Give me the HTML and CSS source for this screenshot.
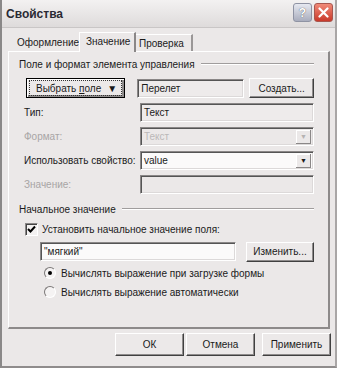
FILE: index.html
```html
<!DOCTYPE html>
<html lang="ru">
<head>
    <meta charset="UTF-8">
    <title>Свойства</title>
    <link rel="stylesheet" href="styles.css">
</head>
<body>
    <div class="window">
        <div class="titlebar">
            <span class="title">Свойства</span>
            <div class="title-buttons">
                <span class="tb-btn help">?</span>
                <span class="tb-btn close">
                    <svg width="11" height="11" viewBox="0 0 11 11"><path d="M1.5 1.5 L9.5 9.5 M9.5 1.5 L1.5 9.5" stroke="#fff" stroke-width="2.2" stroke-linecap="round"/></svg>
                </span>
            </div>
        </div>

        <div class="tabs">
            <span class="tab">Оформление</span>
            <span class="tab active">Значение</span>
            <span class="tab">Проверка</span>
        </div>

        <div class="panel">
            <div class="group-title"><span>Поле и формат элемента управления</span></div>

            <div class="row row-first">
                <span class="button default"><span class="focus"><span>Выбрать&nbsp;<u>п</u>оле</span><b class="arrow">&#9660;</b></span></span>
                <span class="field readonly field-short">Перелет</span>
                <span class="button btn-create">Создать...</span>
            </div>

            <div class="row">
                <span class="label">Тип:</span>
                <span class="field readonly">Текст</span>
            </div>
            <div class="row">
                <span class="label disabled">Формат:</span>
                <span class="field combo disabled-field"><span class="muted">Текст</span><span class="drop"><b>&#9660;</b></span></span>
            </div>
            <div class="row">
                <span class="label">Использовать свойство:</span>
                <span class="field combo white">value<span class="drop"><b>&#9660;</b></span></span>
            </div>
            <div class="row">
                <span class="label disabled">Значение:</span>
                <span class="field disabled-field"></span>
            </div>

            <div class="group-title second"><span>Начальное значение</span></div>

            <div class="check-row">
                <span class="checkbox">
                    <svg width="9" height="9" viewBox="0 0 9 9"><path d="M1 4 L3.5 6.5 L8 1.5" stroke="#000" stroke-width="2" fill="none"/></svg>
                </span>
                <span>Установить начальное значение поля:</span>
            </div>

            <div class="row value-row">
                <span class="field white field-value">"мягкий"</span>
                <span class="button btn-change">Изменить...</span>
            </div>

            <div class="radio-row">
                <span class="radio checked"></span>
                <span>Вычислять выражение при загрузке формы</span>
            </div>
            <div class="radio-row">
                <span class="radio"></span>
                <span>Вычислять выражение автоматически</span>
            </div>
        </div>

        <div class="footer">
            <span class="button footer-btn">ОК</span>
            <span class="button footer-btn">Отмена</span>
            <span class="button footer-btn">Применить</span>
        </div>
    </div>
</body>
</html>
```

FILE: styles.css
```css
body {
    margin: 0;
    font-family: "Liberation Sans", Arial, sans-serif;
    font-size: 10px;
    color: #1a1a1a;
    background: #e9e6e6;
}
.window {
    width: 337px;
    height: 368px;
    box-sizing: border-box;
    background-color: #ebe8e8;
    border-left: 2px solid #8a8888;
    border-right: 2px solid #a9a6a6;
    border-bottom: 2px solid #8f8c8c;
    display: flex;
    flex-direction: column;
    white-space: nowrap;
}
.titlebar {
    height: 27px;
    display: flex;
    align-items: center;
    justify-content: space-between;
    padding: 0 2px 0 4px;
    background: linear-gradient(#f3f1f1, #dedbdb);
    border-bottom: 1px solid #c9c6c6;
}
.title {
    font-weight: bold;
    font-size: 12px;
    color: #2a2a34;
}
.title-buttons {
    display: flex;
    gap: 2px;
    margin-top: -2px;
}
.tb-btn {
    width: 19px;
    height: 19px;
    border-radius: 3px;
    display: flex;
    align-items: center;
    justify-content: center;
    box-sizing: border-box;
}
.help {
    background: linear-gradient(#e6e8f0, #a9adbd);
    border: 1px solid #8f93a3;
    color: #fff;
    font-weight: bold;
    font-size: 12px;
    text-shadow: 0 0 1px #333;
}
.close {
    background: linear-gradient(#f08a78, #c9392a);
    border: 1px solid #a8564e;
}
.tabs {
    display: flex;
    align-items: flex-end;
    height: 23px;
    padding-left: 8px;
}
.tab {
    height: 17px;
    line-height: 17px;
    box-sizing: border-box;
    padding: 0 5px 0 7px;
}
.tab:first-child {
    width: 69px;
}
.tab.active {
    height: 20px;
    line-height: 18px;
    width: 57px;
    padding-left: 6px;
    border-left: 1px solid #fff;
    border-top: 1px solid #fff;
    border-right: 2px solid #8a8787;
    margin-bottom: -1px;
    background: #ebe8e8;
    position: relative;
    z-index: 1;
}
.tab:last-child {
    width: 57px;
    padding-left: 3px;
    border-top: 1px solid #fff;
    border-right: 2px solid #9a9797;
}
.panel {
    margin: 0 5px 0 6px;
    height: 278px;
    box-sizing: border-box;
    border-top: 1px solid #fff;
    border-left: 1px solid #fff;
    border-right: 2px solid #8d8a8a;
    border-bottom: 2px solid #8d8a8a;
    padding: 5px 14px 0 10px;
}
.group-title {
    display: flex;
    align-items: center;
    height: 14px;
}
.group-title::after {
    content: "";
    flex: 1;
    margin-left: 6px;
    border-top: 1px solid #a09d9d;
    border-bottom: 1px solid #fff;
}
.group-title.second {
    margin-top: 8px;
}
.row {
    display: flex;
    align-items: center;
    height: 19px;
    margin-top: 5px;
    padding-left: 5px;
}
.row-first {
    margin-top: 7px;
    height: 20px;
    padding-left: 7px;
}
.label {
    width: 116px;
    flex-shrink: 0;
}
.label.disabled {
    color: #a8a5a5;
}
.field {
    flex: 1;
    height: 19px;
    box-sizing: border-box;
    border-top: 1px solid #8a8787;
    border-left: 1px solid #8a8787;
    border-bottom: 1px solid #fff;
    border-right: 1px solid #fff;
    box-shadow: inset 1px 1px 0 #555, inset -1px -1px 0 #dcd9d9;
    display: flex;
    align-items: center;
    padding-left: 3px;
    background: #efeded;
}
.field.readonly {
    background: #eeebeb;
}
.field.white {
    background: #fbfafa;
}
.disabled-field {
    background: #ebe8e8;
}
.muted {
    color: #bbb8b8;
    flex: 1;
}
.combo {
    justify-content: space-between;
    padding-right: 2px;
}
.drop {
    width: 15px;
    height: 14px;
    margin-left: auto;
    display: flex;
    align-items: center;
    justify-content: center;
    background: #ebe8e8;
    box-shadow: inset -1px -1px 0 #8a8787, inset 1px 1px 0 #fff;
    font-size: 7px;
}
.disabled-field .drop {
    color: #b5b2b2;
}
.field-short {
    flex: 0 0 107px;
    margin-left: 12px;
}
.button {
    height: 20px;
    box-sizing: border-box;
    display: flex;
    align-items: center;
    justify-content: center;
    background: #ece9e9;
    border-top: 1px solid #fff;
    border-left: 1px solid #fff;
    border-right: 1px solid #404040;
    border-bottom: 1px solid #404040;
    box-shadow: inset -1px -1px 0 #8f8c8c;
}
.button.default {
    width: 101px;
    border: 1px solid #000;
    box-shadow: inset 1px 1px 0 #fff, inset -2px -2px 0 #8f8c8c;
    padding: 2px;
}
.focus {
    flex: 1;
    height: 14px;
    border: 1px dotted #333;
    display: flex;
    align-items: center;
    padding-left: 6px;
}
.arrow {
    margin-left: auto;
    margin-right: 4px;
    font-size: 10px;
}
.btn-create {
    width: 66px;
    margin-left: 5px;
}
.check-row {
    display: flex;
    align-items: center;
    gap: 4px;
    margin-top: 6px;
    padding-left: 6px;
    height: 14px;
}
.checkbox {
    width: 13px;
    height: 13px;
    box-sizing: border-box;
    border-top: 1px solid #8a8787;
    border-left: 1px solid #8a8787;
    border-bottom: 1px solid #fff;
    border-right: 1px solid #fff;
    box-shadow: inset 1px 1px 0 #444;
    background: #f3f1f1;
    display: flex;
    align-items: center;
    justify-content: center;
}
.value-row {
    margin-top: 6px;
    padding-left: 21px;
}
.field-value {
    flex: 0 0 196px;
}
.btn-change {
    width: 71px;
    margin-left: 10px;
}
.radio-row {
    display: flex;
    align-items: center;
    gap: 5px;
    padding-left: 25px;
    height: 14px;
    margin-top: 5px;
}
.radio-row + .radio-row {
    margin-top: 5px;
}
.radio {
    width: 12px;
    height: 12px;
    border-radius: 50%;
    box-sizing: border-box;
    border: 1px solid;
    border-color: #7a7777 #fff #fff #7a7777;
    background: #f5f3f3;
    display: flex;
    align-items: center;
    justify-content: center;
}
.radio.checked::after {
    content: "";
    width: 4px;
    height: 4px;
    border-radius: 50%;
    background: #000;
}
.footer {
    display: flex;
    justify-content: flex-end;
    gap: 2px;
    padding: 4px 4px 0 0;
}
.footer-btn {
    width: 69px;
    height: 23px;
}
.footer-btn:last-child {
    margin-left: 5px;
}
```
